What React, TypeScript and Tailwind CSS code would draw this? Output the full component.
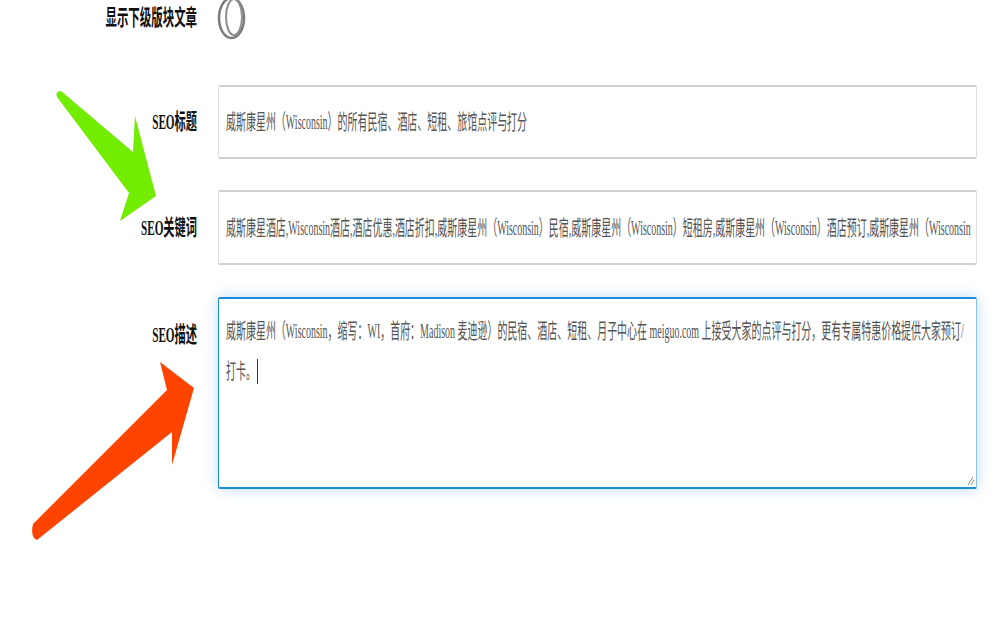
const font = { fontFamily: '"Liberation Serif", "Noto Sans CJK SC", serif' };

function Label({ text, top }: { text: string; top?: boolean }) {
  return (
    <div className={`w-[197px] shrink-0 flex justify-end ${top ? "items-start pt-[24px]" : "items-center"}`}>
      <span className="inline-block origin-right scale-x-[0.51] whitespace-nowrap text-[22px] leading-[28px] font-bold text-[#111]">
        {text}
      </span>
    </div>
  );
}

function Squeezed({ text }: { text: string }) {
  return (
    <span className="inline-block origin-left scale-x-[0.475] whitespace-nowrap text-[21px] leading-[40px] text-[#555]">
      {text}
    </span>
  );
}

function Toggle() {
  return (
    <svg width="32" height="42" viewBox="0 0 32 42" className="ml-[20px] -mt-[2px]">
      <ellipse cx="14.5" cy="20" rx="12.5" ry="20" fill="none" stroke="#7b7b7b" strokeWidth="2.5" />
      <ellipse cx="17" cy="19" rx="8" ry="18" fill="none" stroke="#8e8e8e" strokeWidth="2" />
    </svg>
  );
}

function Arrows() {
  return (
    <svg className="absolute left-0 top-0 pointer-events-none" width="1000" height="640">
      <path d="M57 97 Q55 91 61 91 L133 152 L135 116 L156 196 L120 221 L129 193 Z" fill="#72ec00" />
      <path d="M33 524 L167 390 L160 362 L194 388 L172 465 L172 432 L37 540 Q30 537 33 524 Z" fill="#ff4400" />
    </svg>
  );
}

export default function App() {
  return (
    <div className="relative w-[1000px] h-[640px] bg-white overflow-hidden" style={font}>
      <div className="flex flex-col pr-[23px]">
        <div className="flex h-[40px] items-start">
          <div className="w-[197px] shrink-0 flex justify-end h-[36px] items-center">
            <span className="inline-block origin-right scale-x-[0.52] whitespace-nowrap text-[22px] leading-[28px] font-bold text-[#111]">
              显示下级版块文章
            </span>
          </div>
          <Toggle />
        </div>

        <div className="flex mt-[45px] gap-[21px]">
          <Label text="SEO标题" />
          <div className="flex-1 h-[74px] border-x border-y-2 border-x-[#dddddd] border-y-[#cfcfcf] rounded-[2px] px-[7px] flex items-center overflow-hidden">
            <Squeezed text="威斯康星州（Wisconsin）的所有民宿、酒店、短租、旅馆点评与打分" />
          </div>
        </div>

        <div className="flex mt-[31px] gap-[21px]">
          <Label text="SEO关键词" />
          <div className="flex-1 h-[75px] border-x border-y-2 border-x-[#dddddd] border-y-[#cfcfcf] rounded-[2px] px-[7px] flex items-center overflow-hidden">
            <Squeezed text="威斯康星酒店,Wisconsin酒店,酒店优惠,酒店折扣,威斯康星州（Wisconsin）民宿,威斯康星州（Wisconsin）短租房,威斯康星州（Wisconsin）酒店预订,威斯康星州（Wisconsin" />
          </div>
        </div>

        <div className="flex mt-[32px] gap-[21px]">
          <Label text="SEO描述" top />
          <div className="relative flex-1 h-[192px] border-x border-y-2 border-l-[#1a8cd8] border-r-[#8cc4ea] border-y-[#1a8cd8] rounded-[2px] pl-[7px] pt-[12px] shadow-[0_0_14px_rgba(30,140,230,0.3)] overflow-hidden">
            <div className="flex flex-col">
              <div className="h-[40px] overflow-visible">
                <Squeezed text="威斯康星州（Wisconsin，缩写：WI，首府：Madison 麦迪逊）的民宿、酒店、短租、月子中心在 meiguo.com 上接受大家的点评与打分，更有专属特惠价格提供大家预订/" />
              </div>
              <div className="h-[40px] flex items-center">
                <span className="w-[30px] overflow-visible">
                  <Squeezed text="打卡。" />
                </span>
                <span className="w-px h-[25px] bg-[#333] ml-[1px]" />
              </div>
            </div>
            <svg className="absolute right-[1px] bottom-[1px]" width="8" height="10" viewBox="0 0 8 10">
              <path d="M1 9 L6 1 M4 9 L7 4" stroke="#888" strokeWidth="1" fill="none" />
            </svg>
          </div>
        </div>
      </div>
      <Arrows />
    </div>
  );
}
